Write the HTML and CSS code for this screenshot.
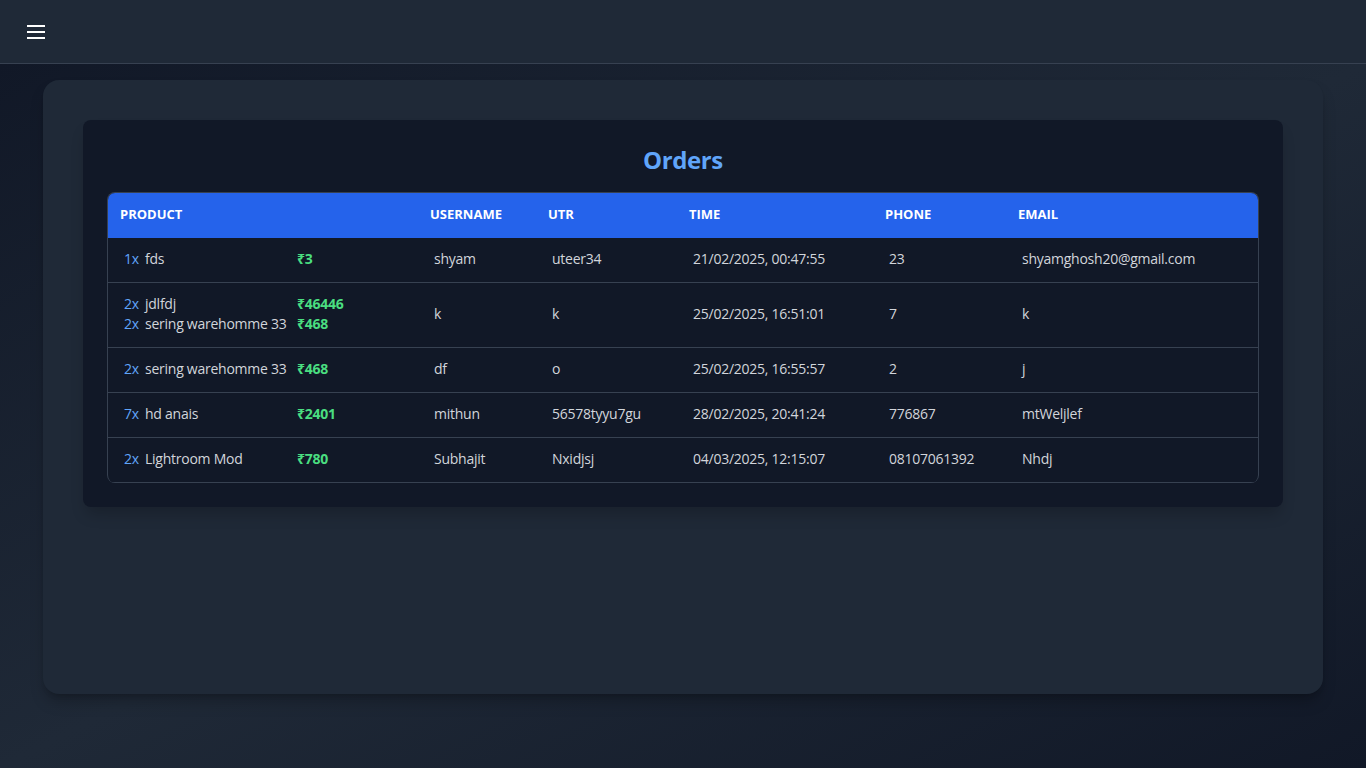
FILE: index.html
```html
<!DOCTYPE html>
<html lang="en">
<head>
<meta charset="utf-8">
<title>Orders</title>
<link rel="stylesheet" href="styles.css">
</head>
<body>
<header class="topbar">
  <button class="menu-btn" aria-label="Menu">
    <svg width="24" height="24" viewBox="0 0 24 24" fill="none" stroke="#fff" stroke-width="2">
      <path d="M3 6h18M3 12h18M3 18h18"/>
    </svg>
  </button>
</header>
<main class="page">
  <section class="container">
    <div class="card">
      <h1 class="title">Orders</h1>
      <div class="table-wrap">
        <table class="orders">
          <colgroup>
            <col class="c-product"><col class="c-user"><col class="c-utr"><col class="c-time"><col class="c-phone"><col class="c-email">
          </colgroup>
          <thead>
            <tr><th>Product</th><th>Username</th><th>UTR</th><th>Time</th><th>Phone</th><th>Email</th></tr>
          </thead>
          <tbody>
            <tr>
              <td><div class="item"><span class="qty">1x</span><span class="name">fds</span><span class="price">₹3</span></div></td>
              <td>shyam</td><td>uteer34</td><td>21/02/2025, 00:47:55</td><td>23</td><td>shyamghosh20@gmail.com</td>
            </tr>
            <tr>
              <td>
                <div class="item"><span class="qty">2x</span><span class="name">jdlfdj</span><span class="price">₹46446</span></div>
                <div class="item"><span class="qty">2x</span><span class="name">sering warehomme 33</span><span class="price">₹468</span></div>
              </td>
              <td>k</td><td>k</td><td>25/02/2025, 16:51:01</td><td>7</td><td>k</td>
            </tr>
            <tr>
              <td><div class="item"><span class="qty">2x</span><span class="name">sering warehomme 33</span><span class="price">₹468</span></div></td>
              <td>df</td><td>o</td><td>25/02/2025, 16:55:57</td><td>2</td><td>j</td>
            </tr>
            <tr>
              <td><div class="item"><span class="qty">7x</span><span class="name">hd anais</span><span class="price">₹2401</span></div></td>
              <td>mithun</td><td>56578tyyu7gu</td><td>28/02/2025, 20:41:24</td><td>776867</td><td>mtWeljlef</td>
            </tr>
            <tr>
              <td><div class="item"><span class="qty">2x</span><span class="name">Lightroom Mod</span><span class="price">₹780</span></div></td>
              <td>Subhajit</td><td>Nxidjsj</td><td>04/03/2025, 12:15:07</td><td>08107061392</td><td>Nhdj</td>
            </tr>
          </tbody>
        </table>
      </div>
    </div>
  </section>
</main>
</body>
</html>
```

FILE: styles.css
```css
* { box-sizing: border-box; }
html, body { margin: 0; padding: 0; }
body {
  font-family: "Open Sans", "Noto Sans", sans-serif;
  background: #111827;
  color: #d1d5db;
  min-height: 768px;
}
.topbar {
  height: 64px;
  background: #1f2937;
  border-bottom: 1px solid #374151;
  display: flex;
  align-items: center;
  padding: 1px 0 0 24px;
}
.menu-btn {
  background: none;
  border: 0;
  padding: 0;
  width: 24px;
  height: 24px;
  display: block;
  cursor: pointer;
}
.menu-btn svg { display: block; }
.page {
  min-height: 704px;
  background: linear-gradient(to bottom right, #111827 0%, #1f2937 50%, #111827 100%);
  padding-top: 16px;
}
.container {
  max-width: 1280px;
  margin: 0 auto;
  min-height: 80vh;
  background: #1f2937;
  border-radius: 16px;
  padding: 40px;
  box-shadow: 0 10px 15px -3px rgba(0,0,0,0.25), 0 4px 6px -4px rgba(0,0,0,0.2);
}
.card {
  background: #111827;
  border-radius: 8px;
  padding: 24px;
  box-shadow: 0 10px 15px -3px rgba(0,0,0,0.2);
}
.title {
  margin: 0 0 16px;
  text-align: center;
  font-size: 24px;
  line-height: 32px;
  font-weight: 700;
  color: #60a5fa;
  letter-spacing: -0.4px;
}
.table-wrap {
  border: 1px solid #374151;
  border-bottom: 0;
  border-radius: 8px;
  overflow: hidden;
}
.orders {
  width: 100%;
  border-collapse: collapse;
  table-layout: fixed;
  font-size: 14px;
  line-height: 20px;
}
.c-product { width: 310px; }
.c-user { width: 118px; }
.c-utr { width: 141px; }
.c-time { width: 196px; }
.c-phone { width: 133px; }
.c-email { width: 252px; }
.orders thead tr { background: #2563eb; }
.orders th {
  text-align: left;
  color: #fff;
  font-weight: 700;
  font-size: 13px;
  text-transform: uppercase;
  padding: 11px 12px 14px;
  line-height: 20px;
}
.orders td {
  padding: 11px 16px 13px;
  border-bottom: 1px solid #374151;
  vertical-align: middle;
  white-space: nowrap;
  letter-spacing: -0.25px;
}
.item { display: flex; }
.qty { width: 21px; color: #60a5fa; flex: none; }
.name { width: 152px; flex: none; }
.price { color: #4ade80; font-weight: 700; }
```
